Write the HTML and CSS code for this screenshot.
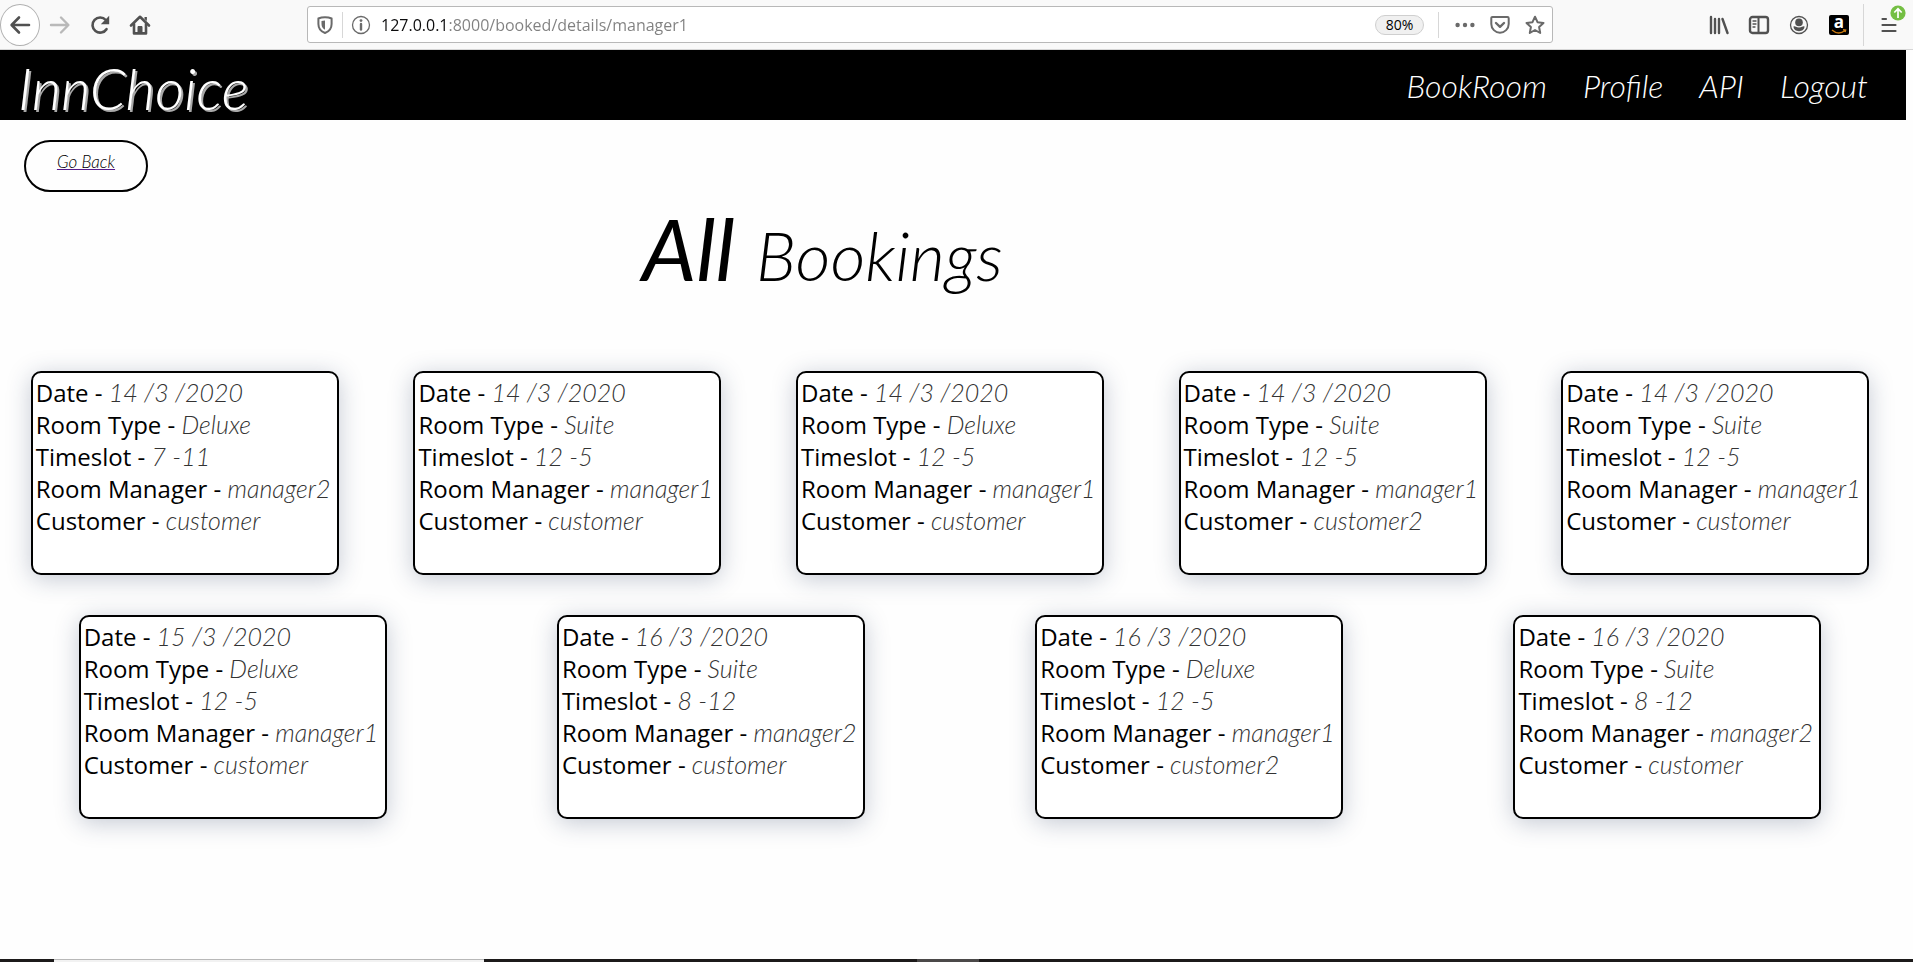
FILE: index.html
```html
<!DOCTYPE html>
<html lang="en">
<head>
<meta charset="utf-8">
<title>InnChoice - All Bookings</title>
<link rel="stylesheet" href="styles.css">
</head>
<body>
<div class="toolbar">
  <div class="tools tools-left">
    <button class="tool tool-back" aria-label="Back"><svg class="ico" width="22" height="22" viewBox="0 0 22 22"><path d="M20 11H3M10 3.5L2.6 11l7.4 7.5" stroke-width="2.6"/></svg></button>
    <button class="tool tool-off" aria-label="Forward"><svg class="ico" width="22" height="22" viewBox="0 0 22 22"><path d="M2 11h17M12 3.5l7.4 7.5-7.4 7.5" stroke-width="2.4"/></svg></button>
    <button class="tool" aria-label="Reload"><svg class="ico" width="22" height="22" viewBox="0 0 22 22"><path d="M17.5 15.2A7.6 7.6 0 1 1 16.8 6" stroke-width="2.6"/><path d="M20.2 1.8v8.4h-8.4z" class="solid" stroke="none"/></svg></button>
    <button class="tool" aria-label="Home"><svg class="ico" width="22" height="22" viewBox="0 0 22 22"><path d="M2 11.5L11 2.8l9 8.7" stroke-width="2.6"/><path d="M5 10v9.4h12V10" stroke-width="2.6"/><path d="M9 19v-6.5h4V19z" class="solid" stroke-width="1"/><path d="M15.5 3h2.4v4l-2.4-2z" class="solid" stroke="none"/></svg></button>
  </div>
  <div class="urlbar">
    <svg class="ico grey" width="18" height="20" viewBox="0 0 18 20"><path d="M9 2.2c2.5 0 4.600.4 6.600 1.300v5.500c0 4.500-2.600 7.500-6.600 9-4-1.500-6.600-4.500-6.600-9V3.500C4.400 2.600 6.500 2.200 9 2.200z" stroke-width="2"/><path d="M9 5.500c-1.400 0-2.500.2-3.500.6V9c0 2.800 1.300 4.700 3.500 5.800z" class="solid" stroke="none"/></svg>
    <span class="divider"></span>
    <svg class="ico grey" width="20" height="20" viewBox="0 0 20 20"><circle cx="10" cy="10" r="8.500" stroke-width="1.300"/><path d="M10 9v5.500" stroke-width="2.400"/><circle cx="10" cy="5.600" r="1.400" class="solid" stroke="none"/></svg>
    <input class="url" type="text" aria-label="Address" value="127.0.0.1:8000/booked/details/manager1">
    <button class="zoom">80%</button>
    <span class="divider"></span>
    <button class="mini" aria-label="Page actions"><svg class="ico grey" width="20" height="20" viewBox="0 0 20 20"><g class="solid" stroke="none"><circle cx="2.600" cy="10" r="2.200"/><circle cx="10" cy="10" r="2.200"/><circle cx="17.400" cy="10" r="2.200"/></g></svg></button>
    <button class="mini" aria-label="Save to Pocket"><svg class="ico grey" width="20" height="20" viewBox="0 0 20 20"><path d="M2.500 2h15q1.200 0 1.200 1.200V9a8.700 8.700 0 0 1-17.400 0V3.200Q1.300 2 2.500 2z" stroke-width="2"/><path d="M6 8l4 3.800L14 8" stroke-width="2.400"/></svg></button>
    <button class="mini" aria-label="Bookmark"><svg class="ico grey" width="20" height="20" viewBox="0 0 20 20"><path d="M10 1.700l2.500 5.500 6 .7-4.400 4.100 1.100 6L10 15l-5.200 3 1.100-6-4.400-4.100 6-.7z" stroke-width="2"/></svg></button>
  </div>
  <div class="tools tools-right">
    <button class="tool" aria-label="Library"><svg class="ico" width="20" height="20" viewBox="0 0 20 20"><path d="M2 2v16M6 4v14M10 4v14M13.500 4l5 14" stroke-width="2.400"/></svg></button>
    <button class="tool" aria-label="Sidebars"><svg class="ico" width="22" height="20" viewBox="0 0 22 20"><rect x="2" y="2" width="18" height="16" rx="2.500" stroke-width="2.400"/><path d="M10.500 2v16" stroke-width="2"/><path d="M5 6h3M5 9h3M5 12h2" stroke-width="1.300"/></svg></button>
    <button class="tool" aria-label="Account"><svg class="ico" width="20" height="20" viewBox="0 0 20 20"><circle cx="10" cy="10" r="8.500" stroke-width="1.300"/><circle cx="10" cy="7.400" r="3.800" class="solid" stroke="none"/><path d="M4.500 11.500c1.500-.8 2.300 1 5.500 1s4-1.800 5.500-1c0 2.800-2.500 4.700-5.500 4.700s-5.500-1.900-5.500-4.700z" class="solid" stroke="none"/></svg></button>
    <button class="tool" aria-label="Amazon"><span class="amazon">a<svg class="smile" width="16" height="5" viewBox="0 0 16 5"><path d="M1 1c4 3.600 9 3.600 13 .6M12 .7l2.700.3-.6 2.200" fill="none" stroke="#c87a12" stroke-width="1.300"/></svg></span></button>
    <span class="divider tall"></span>
    <button class="tool menu" aria-label="Menu"><svg class="ico" width="18" height="18" viewBox="0 0 18 18"><path d="M2.500 3h3.500M2.500 9h13M2.500 15h13" stroke-width="2.200"/></svg><svg class="badge" width="16" height="16" viewBox="0 0 16 16"><circle cx="8" cy="8" r="7.600" fill="#74bf43"/><path d="M8 13V4M4.300 7.500L8 3.800l3.700 3.700" fill="none" stroke="#fff" stroke-width="1.700"/></svg></button>
  </div>
</div>

<header class="nav">
  <a class="logo" href="#">InnChoice</a>
  <nav class="links">
    <a href="#">BookRoom</a>
    <a href="#">Profile</a>
    <a href="#">API</a>
    <a href="#">Logout</a>
  </nav>
</header>

<main class="page">
  <div class="back"><a href="#">Go Back</a></div>
  <h1 class="title"><span class="all">All</span> Bookings</h1>
  <section class="cards">
    <article class="card"><p>Date - <i>14 /3 /2020</i></p><p>Room Type - <i>Deluxe</i></p><p>Timeslot - <i>7 -11</i></p><p>Room Manager - <i>manager2</i></p><p>Customer - <i>customer</i></p></article>
    <article class="card"><p>Date - <i>14 /3 /2020</i></p><p>Room Type - <i>Suite</i></p><p>Timeslot - <i>12 -5</i></p><p>Room Manager - <i>manager1</i></p><p>Customer - <i>customer</i></p></article>
    <article class="card"><p>Date - <i>14 /3 /2020</i></p><p>Room Type - <i>Deluxe</i></p><p>Timeslot - <i>12 -5</i></p><p>Room Manager - <i>manager1</i></p><p>Customer - <i>customer</i></p></article>
    <article class="card"><p>Date - <i>14 /3 /2020</i></p><p>Room Type - <i>Suite</i></p><p>Timeslot - <i>12 -5</i></p><p>Room Manager - <i>manager1</i></p><p>Customer - <i>customer2</i></p></article>
    <article class="card"><p>Date - <i>14 /3 /2020</i></p><p>Room Type - <i>Suite</i></p><p>Timeslot - <i>12 -5</i></p><p>Room Manager - <i>manager1</i></p><p>Customer - <i>customer</i></p></article>
    <article class="card"><p>Date - <i>15 /3 /2020</i></p><p>Room Type - <i>Deluxe</i></p><p>Timeslot - <i>12 -5</i></p><p>Room Manager - <i>manager1</i></p><p>Customer - <i>customer</i></p></article>
    <article class="card"><p>Date - <i>16 /3 /2020</i></p><p>Room Type - <i>Suite</i></p><p>Timeslot - <i>8 -12</i></p><p>Room Manager - <i>manager2</i></p><p>Customer - <i>customer</i></p></article>
    <article class="card"><p>Date - <i>16 /3 /2020</i></p><p>Room Type - <i>Deluxe</i></p><p>Timeslot - <i>12 -5</i></p><p>Room Manager - <i>manager1</i></p><p>Customer - <i>customer2</i></p></article>
    <article class="card"><p>Date - <i>16 /3 /2020</i></p><p>Room Type - <i>Suite</i></p><p>Timeslot - <i>8 -12</i></p><p>Room Manager - <i>manager2</i></p><p>Customer - <i>customer</i></p></article>
  </section>
</main>

<footer class="taskbar"><span class="task-start"></span><span class="task-search"></span><span class="task-rest"></span><span class="task-active"></span></footer>
</body>
</html>
```
FILE: styles.css
```css
* {
  box-sizing: border-box;
}

body {
  margin: 0;
  min-height: 100vh;
  display: flex;
  flex-direction: column;
  background: #fefefe;
  color: #000;
  font-family: "Open Sans", "Noto Sans", sans-serif;
}

button {
  border: 0;
  padding: 0;
  background: none;
  font: inherit;
}

/* Browser toolbar */
.toolbar {
  height: 50px;
  display: flex;
  align-items: center;
  background: #f9f9f9;
  border-bottom: 1px solid #d6d6d6;
}

.tools {
  display: flex;
  align-items: center;
}

.tools-left {
  width: 307px;
}

.tools-right {
  width: 360px;
  justify-content: flex-end;
  padding-right: 4px;
}

.tool {
  position: relative;
  width: 40px;
  height: 42px;
  display: flex;
  align-items: center;
  justify-content: center;
  color: #515151;
}

.tool-back {
  border: 1px solid #b1b1b1;
  border-radius: 50%;
  background: #fff;
}

.tool-off {
  color: #b9b9b9;
}

.ico {
  display: block;
  flex: none;
  fill: none;
  stroke: currentColor;
  stroke-linecap: round;
  stroke-linejoin: round;
}

.grey {
  color: #6a6a6a;
}

.solid {
  fill: currentColor;
}

.urlbar {
  flex: 1;
  height: 37px;
  display: flex;
  align-items: center;
  padding: 0 0 0 8px;
  background: #fff;
  border: 1px solid #b8b8b8;
  border-radius: 3px;
}

.divider {
  width: 1px;
  height: 26px;
  margin: 0 8px;
  background: #d7d7d7;
}

.divider.tall {
  height: 42px;
  margin: 0 5px 0 4px;
}

.url {
  flex: 1;
  min-width: 0;
  height: 30px;
  margin-left: 10px;
  padding: 0;
  border: 0;
  font-family: "Open Sans", sans-serif;
  font-size: 16px;
  background: linear-gradient(to right, #0c0c0d 67px, #808080 67px);
  -webkit-background-clip: text;
  background-clip: text;
  -webkit-text-fill-color: transparent;
}

.zoom {
  width: 49px;
  height: 20px;
  margin-right: 6px;
  border: 1px solid #cfcfcf;
  border-radius: 10px;
  background: #f0f0f0;
  font-size: 14px;
  line-height: 18px;
}

.mini {
  width: 35px;
  display: flex;
  justify-content: center;
}

.amazon {
  position: relative;
  width: 20px;
  height: 20px;
  border-radius: 2px;
  background: #000;
  color: #fff;
  font-size: 17px;
  font-weight: 700;
  line-height: 14px;
  text-align: center;
}

.smile {
  position: absolute;
  left: 2px;
  bottom: 1px;
}

.badge {
  position: absolute;
  top: 1px;
  right: 3px;
}

/* Site header */
.nav {
  height: 70px;
  margin-right: 7px;
  padding: 0 38px 0 18px;
  display: flex;
  align-items: center;
  justify-content: space-between;
  background: #000;
  font-family: Lato, sans-serif;
  font-style: italic;
}

.nav a {
  color: #fff;
  text-decoration: none;
}

.logo {
  padding-top: 6px;
  font-size: 57px;
  line-height: 60px;
  font-weight: 300;
  text-shadow: 2px 2px 0 #a8a8a8;
}

.links {
  display: flex;
  gap: 36px;
  padding-top: 2px;
  font-size: 32px;
  line-height: 36px;
  font-weight: 300;
}

/* Bookings */
.page {
  flex: 1;
}

.back {
  width: 124px;
  height: 52px;
  margin: 20px 0 0 24px;
  padding-top: 8px;
  border: 2px solid #000;
  border-radius: 26px;
  text-align: center;
  font-family: Lato, sans-serif;
  font-size: 17px;
  line-height: 24px;
  font-style: italic;
  font-weight: 300;
}

.back a {
  color: #000;
  text-decoration-color: #551a8b;
}

.title {
  margin: 0;
  padding-left: 642px;
  font-family: Lato, sans-serif;
  font-size: 68px;
  line-height: 112px;
  font-style: italic;
  font-weight: 300;
}

.all {
  margin-right: 4px;
  font-size: 86px;
  font-weight: 400;
}

.cards {
  display: flex;
  flex-wrap: wrap;
  justify-content: space-around;
  row-gap: 40px;
  margin-top: 60px;
}

.card {
  width: 308px;
  min-height: 204px;
  margin-right: 13px;
  padding: 3px 0 2px 3px;
  border: 2px solid #000;
  border-radius: 10px;
  background: #fff;
  box-shadow: 0 4px 24px rgba(30, 50, 90, 0.26);
  font-size: 24px;
  line-height: 32px;
  white-space: nowrap;
}

.card p {
  height: 32px;
  margin: 0;
}

.card i {
  font-family: Lato, sans-serif;
  font-size: 25px;
  font-weight: 300;
  color: #333;
}

/* Desktop taskbar edge */
.taskbar {
  height: 3px;
  display: flex;
  background: #1c1a1a;
}

.task-start {
  width: 54px;
}

.task-search {
  width: 430px;
  background: #f2f2f2;
  border-top: 1px solid #b8b8b8;
}

.task-rest {
  width: 433px;
}

.task-active {
  width: 62px;
  background: #4b4949;
}
```
